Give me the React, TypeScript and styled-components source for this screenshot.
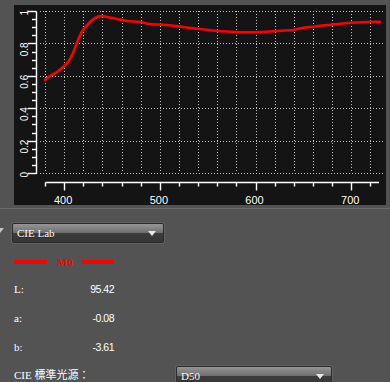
import React from 'react';
import styled, { createGlobalStyle } from 'styled-components';

const GlobalStyle = createGlobalStyle`
  html, body {
    margin: 0;
    padding: 0;
    background: #535353;
  }
  * {
    box-sizing: border-box;
  }
`;

const Page = styled.div`
  width: 390px;
  height: 382px;
  overflow: hidden;
  background: #535353;
  padding-top: 5px;
  font-family: "Liberation Serif", "Noto Sans CJK TC", serif;
  color: #fff;
`;

const ChartPanel = styled.div`
  margin-left: 14px;
  width: 372px;
  height: 200px;
  background: #141414;
`;

const Divider = styled.div`
  margin-top: 3px;
  height: 1px;
  background: #6c6c6c;
`;

const Settings = styled.div`
  padding: 14px 0 0 12px;
  display: flex;
  flex-direction: column;
`;

const SelectRow = styled.div`
  display: flex;
  align-items: flex-start;
  position: relative;
`;

const Collapse = styled.span`
  position: absolute;
  left: -16px;
  top: 5px;
  width: 0;
  height: 0;
  border-left: 4px solid transparent;
  border-right: 4px solid transparent;
  border-top: 5px solid #c4c4c4;
`;

const Select = styled.div<{ $width: number }>`
  width: ${(p) => p.$width}px;
  height: 20px;
  flex-shrink: 0;
  display: flex;
  align-items: center;
  justify-content: space-between;
  padding: 0 7px 0 4px;
  border: 1px solid #2b2b2b;
  border-radius: 2px;
  box-shadow: 0 0 0 1px #626262;
  background: linear-gradient(
    to bottom,
    #959595 0%,
    #6e6e6e 50%,
    #3c3c3c 50%,
    #363636 100%
  );
  font-size: 11px;
  color: #fff;
  text-shadow: 0 1px 0 rgba(0, 0, 0, 0.4);
`;

const Caret = styled.span`
  width: 0;
  height: 0;
  border-left: 4px solid transparent;
  border-right: 4px solid transparent;
  border-top: 5px solid #e8e8e8;
  margin-top: 1px;
`;

const Legend = styled.div`
  margin: 14px 0 0 2px;
  height: 10px;
  display: flex;
  align-items: center;
`;

const LegendLine = styled.span`
  width: 33px;
  height: 4px;
  background: #ff0000;
`;

const LegendText = styled.span`
  width: 15px;
  margin: 0 9px 0 10px;
  font-size: 11px;
  font-weight: bold;
  line-height: 12px;
  white-space: nowrap;
  color: #ff0000;
`;

const Values = styled.div`
  margin: 7px 0 0 2px;
  display: flex;
  flex-direction: column;
`;

const ValueRow = styled.div`
  height: 29px;
  display: flex;
  align-items: center;
  font-size: 11px;
`;

const ValueLabel = styled.span`
  width: 76px;
`;

const Value = styled.span`
  width: 24px;
  text-align: right;
  font-family: "Liberation Sans", sans-serif;
  font-size: 10.5px;
  letter-spacing: -0.5px;
  white-space: nowrap;
`;

const IlluminantRow = styled.div`
  margin: 5px 0 0 2px;
  display: flex;
  align-items: flex-start;
`;

const IlluminantLabel = styled.span`
  width: 162px;
  line-height: 19px;
  font-size: 11px;
  font-family: "Liberation Serif", "Noto Sans CJK TC", serif;
`;

// chart geometry, relative to the panel
const xOf = (nm: number) => 31 + (nm - 380) * 0.957;
const yOf = (v: number) => 168 - 162 * v;
const px = (n: number) => Math.round(n) + 0.5;

// red curve sampled from the reference (panel coordinates)
const curve: [number, number][] = [
  [31, 75], [36, 71], [43, 67], [49, 62], [54, 57], [59, 48], [64, 35],
  [69, 25], [76, 17], [83, 12], [88, 11], [93, 12], [103, 14], [113, 16],
  [126, 17], [136, 19], [153, 20], [169, 22], [181, 23.5], [201, 25.7],
  [221, 27], [248, 27], [261, 26], [279, 25], [288, 23], [314, 20],
  [334, 18], [354, 17], [366, 16.7],
];

const smoothPath = (pts: [number, number][]) => {
  let d = `M${pts[0][0]},${pts[0][1]}`;
  for (let i = 0; i < pts.length - 1; i++) {
    const p0 = pts[i - 1] || pts[i];
    const p1 = pts[i];
    const p2 = pts[i + 1];
    const p3 = pts[i + 2] || p2;
    const c1x = p1[0] + (p2[0] - p0[0]) / 6;
    const c1y = p1[1] + (p2[1] - p0[1]) / 6;
    const c2x = p2[0] - (p3[0] - p1[0]) / 6;
    const c2y = p2[1] - (p3[1] - p1[1]) / 6;
    d += ` C${c1x.toFixed(1)},${c1y.toFixed(1)} ${c2x.toFixed(1)},${c2y.toFixed(1)} ${p2[0]},${p2[1]}`;
  }
  return d;
};

const Chart = () => {
  const gridX: number[] = [];
  for (let nm = 380; nm <= 720; nm += 20) gridX.push(nm);
  const gridY = [0, 0.2, 0.4, 0.6, 0.8, 1];
  const minorY: number[] = [];
  for (let i = 0; i <= 20; i++) minorY.push(i * 0.05);

  return (
    <svg width="372" height="200" viewBox="0 0 372 200">
      <g stroke="#c4c4c4" strokeWidth="1" strokeDasharray="1 2">
        {gridX.map((nm) => (
          <line key={`gx${nm}`} x1={px(xOf(nm))} y1="6" x2={px(xOf(nm))} y2="168" />
        ))}
        {gridY.map((v) => (
          <line key={`gy${v}`} x1="26" y1={px(yOf(v))} x2="369" y2={px(yOf(v))} />
        ))}
      </g>

      <g stroke="#fff" strokeWidth="1.4" fill="none">
        <line x1="22.5" y1={px(yOf(1))} x2="22.5" y2={px(yOf(0)) + 0.5} />
        {minorY.map((v, i) => (
          <line
            key={`ty${i}`}
            x1={i % 4 === 0 ? 14 : 18}
            y1={px(yOf(v))}
            x2="22.5"
            y2={px(yOf(v))}
          />
        ))}
        <line x1={px(xOf(380))} y1="177.5" x2="365" y2="177.5" />
        {gridX.map((nm) => (
          <line
            key={`tx${nm}`}
            x1={px(xOf(nm))}
            y1="177.5"
            x2={px(xOf(nm))}
            y2={nm % 100 === 0 ? 185.5 : 181.5}
          />
        ))}
      </g>

      <g fill="#fff" fontFamily="Liberation Sans, sans-serif">
        {gridY.map((v) => (
          <text
            key={`ly${v}`}
            fontSize="10"
            textAnchor="end"
            transform={`translate(13.5 ${yOf(v) - 1}) rotate(-90)`}
          >
            {v === 0 || v === 1 ? String(v) : v.toFixed(1)}
          </text>
        ))}
        {[400, 500, 600, 700].map((nm) => (
          <text key={`lx${nm}`} x={xOf(nm) - 1} y="199" fontSize="11" textAnchor="middle">
            {nm}
          </text>
        ))}
      </g>

      <path
        d={smoothPath(curve)}
        fill="none"
        stroke="#ff0000"
        strokeWidth="2.6"
        strokeLinecap="round"
        strokeLinejoin="round"
      />
    </svg>
  );
};

const values = [
  { label: 'L:', value: '95.42' },
  { label: 'a:', value: '-0.08' },
  { label: 'b:', value: '-3.61' },
];

export default function App() {
  return (
    <>
      <GlobalStyle />
      <Page>
        <ChartPanel>
          <Chart />
        </ChartPanel>
        <Divider />
        <Settings>
          <SelectRow>
            <Collapse />
            <Select $width={152}>
              <span>CIE Lab</span>
              <Caret />
            </Select>
          </SelectRow>
          <Legend>
            <LegendLine />
            <LegendText>M0</LegendText>
            <LegendLine />
          </Legend>
          <Values>
            {values.map((row) => (
              <ValueRow key={row.label}>
                <ValueLabel>{row.label}</ValueLabel>
                <Value>{row.value}</Value>
              </ValueRow>
            ))}
          </Values>
          <IlluminantRow>
            <IlluminantLabel>CIE 標準光源：</IlluminantLabel>
            <Select $width={156}>
              <span>D50</span>
              <Caret />
            </Select>
          </IlluminantRow>
        </Settings>
      </Page>
    </>
  );
}
